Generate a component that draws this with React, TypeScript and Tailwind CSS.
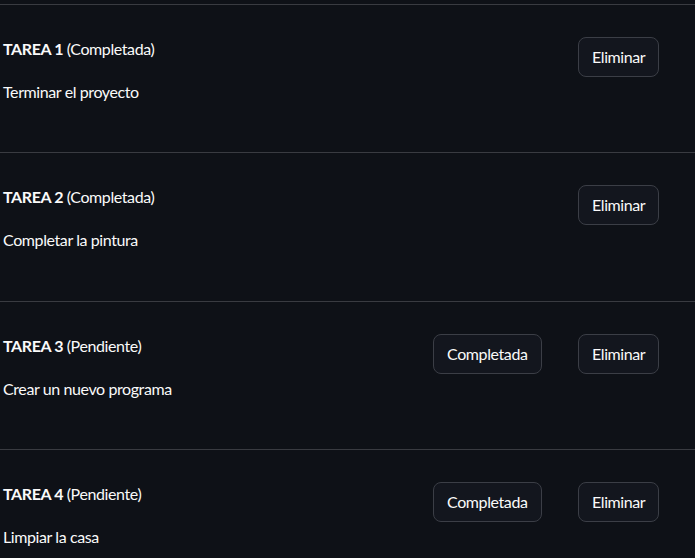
import React from "react";

const tasks = [
  { n: 1, status: "Completada", desc: "Terminar el proyecto", done: true },
  { n: 2, status: "Completada", desc: "Completar la pintura", done: true },
  { n: 3, status: "Pendiente", desc: "Crear un nuevo programa", done: false },
  { n: 4, status: "Pendiente", desc: "Limpiar la casa", done: false },
];

function Btn({ children }: { children: React.ReactNode }) {
  return (
    <button className="h-10 px-[13px] rounded-lg border border-[#3b3e46] bg-[#13161e] text-[#fafafa] text-[16px] leading-6 tracking-[-0.4px]">
      {children}
    </button>
  );
}

export default function App() {
  return (
    <div
      className="w-[695px] h-[558px] overflow-hidden bg-[#0e1117] text-[#fafafa] pt-1 tracking-[-0.4px]"
      style={{ fontFamily: "Lato, 'Open Sans', sans-serif" }}
    >
      {tasks.map((t) => (
        <div key={t.n}>
          <div className="h-px bg-[#393b41]" />
          <div className="grid grid-cols-[414px_129px_129px] gap-4 pl-[3px] pt-8 pb-[48.34px]">
            <div className="flex flex-col gap-[19px] text-[16px] leading-6">
              <div>
                <span className="font-bold">TAREA {t.n}</span> ({t.status})
              </div>
              <div>{t.desc}</div>
            </div>
            <div>{!t.done && <Btn>Completada</Btn>}</div>
            <div>
              <Btn>Eliminar</Btn>
            </div>
          </div>
        </div>
      ))}
    </div>
  );
}
